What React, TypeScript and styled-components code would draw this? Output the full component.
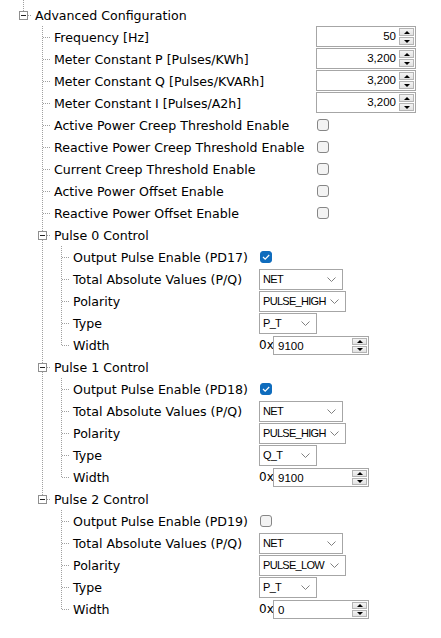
import styled, { createGlobalStyle } from 'styled-components';

type Control =
    | { kind: 'spin'; value: string }
    | { kind: 'check'; checked: boolean }
    | { kind: 'select'; value: string; width: number }
    | { kind: 'hex'; value: string };

type TreeNode = {
    label: string;
    control?: Control;
    controlX?: number; // x where the controls of the children start
    children?: TreeNode[];
};

type FlatRow = {
    node: TreeNode;
    trail: boolean[];
    isLast: boolean;
    controlX: number;
};

const pulse = (n: number, pin: string, on: boolean, polarity: string, type: string, width: string): TreeNode => ({
    label: `Pulse ${n} Control`,
    controlX: 259,
    children: [
        { label: `Output Pulse Enable (${pin})`, control: { kind: 'check', checked: on } },
        { label: 'Total Absolute Values (P/Q)', control: { kind: 'select', value: 'NET', width: 84 } },
        { label: 'Polarity', control: { kind: 'select', value: polarity, width: 87 } },
        { label: 'Type', control: { kind: 'select', value: type, width: 58 } },
        { label: 'Width', control: { kind: 'hex', value: width } },
    ],
});

const tree: TreeNode = {
    label: 'Advanced Configuration',
    controlX: 316,
    children: [
        { label: 'Frequency [Hz]', control: { kind: 'spin', value: '50' } },
        { label: 'Meter Constant P [Pulses/KWh]', control: { kind: 'spin', value: '3,200' } },
        { label: 'Meter Constant Q [Pulses/KVARh]', control: { kind: 'spin', value: '3,200' } },
        { label: 'Meter Constant I [Pulses/A2h]', control: { kind: 'spin', value: '3,200' } },
        { label: 'Active Power Creep Threshold Enable', control: { kind: 'check', checked: false } },
        { label: 'Reactive Power Creep Threshold Enable', control: { kind: 'check', checked: false } },
        { label: 'Current Creep Threshold Enable', control: { kind: 'check', checked: false } },
        { label: 'Active Power Offset Enable', control: { kind: 'check', checked: false } },
        { label: 'Reactive Power Offset Enable', control: { kind: 'check', checked: false } },
        pulse(0, 'PD17', true, 'PULSE_HIGH', 'P_T', '9100'),
        pulse(1, 'PD18', true, 'PULSE_HIGH', 'Q_T', '9100'),
        pulse(2, 'PD19', false, 'PULSE_LOW', 'P_T', '0'),
    ],
};

function flatten(node: TreeNode, trail: boolean[], isLast: boolean, controlX: number, out: FlatRow[]) {
    out.push({ node, trail, isLast, controlX });
    const kids = node.children ?? [];
    kids.forEach((child, i) =>
        flatten(child, [...trail, isLast], i === kids.length - 1, node.controlX ?? controlX, out)
    );
    return out;
}

const GlobalStyle = createGlobalStyle`
    html, body {
        margin: 0;
        padding: 0;
        background: #fff;
    }
    body {
        font-family: 'DejaVu Sans', Verdana, sans-serif;
        font-size: 12.6px;
        color: #000;
    }
`;

const Tree = styled.div`
    width: 441px;
    height: 638px;
    overflow: hidden;
`;

const Lead = styled.div`
    height: 4px;
    padding-left: 13px;
    display: flex;
`;

const Row = styled.div`
    display: flex;
    align-items: center;
    height: 22px;
    padding-left: 13px;
`;

const LabelArea = styled.div<{ $width?: number }>`
    display: flex;
    align-items: center;
    flex: none;
    width: ${(p) => (p.$width ? `${p.$width}px` : 'auto')};
    height: 22px;
`;

const GuideSvg = styled.svg`
    display: block;
    flex: none;
`;

const Label = styled.span`
    margin-left: 3px;
    white-space: nowrap;
    line-height: 22px;
    padding-top: 1px;
`;

const DOT = '#a0a0a0';

type GuideKind = 'none' | 'pass' | 'tee' | 'end';

function Guide({ kind, box }: { kind: GuideKind; box?: boolean }) {
    return (
        <GuideSvg width={19} height={22} viewBox="0 0 19 22">
            {kind !== 'none' && (
                <line
                    x1={10.5}
                    y1={0}
                    x2={10.5}
                    y2={kind === 'end' ? 11 : 22}
                    stroke={DOT}
                    strokeDasharray="1 1"
                />
            )}
            {(kind === 'tee' || kind === 'end') && (
                <line x1={box ? 15 : 11} y1={11.5} x2={19} y2={11.5} stroke={DOT} strokeDasharray="1 1" />
            )}
            {box && (
                <>
                    <rect x={6.5} y={7.5} width={8} height={8} fill="#fff" stroke="#8f8f8f" />
                    <line x1={8} y1={11.5} x2={13} y2={11.5} stroke="#222" />
                </>
            )}
        </GuideSvg>
    );
}

function LeadGuide() {
    return (
        <GuideSvg width={19} height={4} viewBox="0 0 19 4">
            <line x1={10.5} y1={0} x2={10.5} y2={4} stroke={DOT} strokeDasharray="1 1" />
        </GuideSvg>
    );
}

/* ---- spinner ---- */

const SpinBox = styled.div`
    display: flex;
    box-sizing: border-box;
    width: 100px;
    height: 21px;
    padding: 1px;
    border: 1px solid #a6a6a6;
    background: #fff;
    align-self: flex-start;
`;

const SpinValue = styled.span<{ $align: 'left' | 'right' }>`
    flex: 1;
    text-align: ${(p) => p.$align};
    padding: 0 3px;
    font-family: 'Liberation Sans', Arial, sans-serif;
    font-size: 11.5px;
    line-height: 17px;
`;

const SpinButtons = styled.div`
    display: flex;
    flex-direction: column;
    width: 15px;
    gap: 1px;
`;

const SpinButton = styled.div`
    flex: 1;
    display: flex;
    align-items: center;
    justify-content: center;
    border: 1px solid #b4b4b4;
    background: linear-gradient(#f4f4f4, #e2e2e2);
`;

const Arrow = styled.span<{ $up?: boolean }>`
    width: 0;
    height: 0;
    border-left: 3px solid transparent;
    border-right: 3px solid transparent;
    ${(p) => (p.$up ? 'border-bottom: 3px solid #000;' : 'border-top: 3px solid #000;')}
`;

function Spinner() {
    return (
        <SpinButtons>
            <SpinButton>
                <Arrow $up />
            </SpinButton>
            <SpinButton>
                <Arrow />
            </SpinButton>
        </SpinButtons>
    );
}

/* ---- checkbox ---- */

const CheckBox = styled.span<{ $on: boolean }>`
    display: inline-flex;
    align-items: center;
    justify-content: center;
    box-sizing: border-box;
    width: 12px;
    height: 12px;
    margin-left: 1px;
    border-radius: 3px;
    border: 1px solid ${(p) => (p.$on ? '#0f6cbd' : '#868686')};
    background: ${(p) => (p.$on ? '#0f6cbd' : '#f3f3f3')};
`;

/* ---- select ---- */

const SelectBox = styled.div<{ $width: number }>`
    display: flex;
    align-items: center;
    justify-content: space-between;
    box-sizing: border-box;
    width: ${(p) => p.$width}px;
    height: 21px;
    padding: 0 6px 0 3px;
    border: 1px solid #a6a6a6;
    background: #fff;
    font-family: 'Liberation Sans', Arial, sans-serif;
    font-size: 11px;
    letter-spacing: -0.7px;
`;

/* ---- hex ---- */

const HexWrap = styled.div`
    display: flex;
    align-items: center;
`;

const HexPrefix = styled.span`
    width: 14px;
    font-size: 12px;
`;

const HexBox = styled(SpinBox)`
    width: 96px;
    height: 19px;
    align-self: center;
`;

function ControlView({ control }: { control: Control }) {
    switch (control.kind) {
        case 'spin':
            return (
                <SpinBox>
                    <SpinValue $align="right">{control.value}</SpinValue>
                    <Spinner />
                </SpinBox>
            );
        case 'check':
            return (
                <CheckBox $on={control.checked}>
                    {control.checked && (
                        <svg width="10" height="10" viewBox="0 0 10 10">
                            <polyline points="2,5 4.2,7.2 8.2,3" fill="none" stroke="#fff" strokeWidth="1.2" />
                        </svg>
                    )}
                </CheckBox>
            );
        case 'select':
            return (
                <SelectBox $width={control.width}>
                    <span>{control.value}</span>
                    <svg width="9" height="5" viewBox="0 0 9 5">
                        <polyline points="0.5,0.5 4.5,4.5 8.5,0.5" fill="none" stroke="#808080" />
                    </svg>
                </SelectBox>
            );
        case 'hex':
            return (
                <HexWrap>
                    <HexPrefix>0x</HexPrefix>
                    <HexBox>
                        <SpinValue $align="left">{control.value}</SpinValue>
                        <Spinner />
                    </HexBox>
                </HexWrap>
            );
    }
}

export default function App() {
    const rows = flatten(tree, [], true, 316, []);

    return (
        <>
            <GlobalStyle />
            <Tree>
                <Lead>
                    <LeadGuide />
                </Lead>
                {rows.map((row, i) => (
                    <Row key={i}>
                        <LabelArea $width={row.node.control ? row.controlX - 13 : undefined}>
                            {row.trail.map((last, j) => (
                                <Guide key={j} kind={last ? 'none' : 'pass'} />
                            ))}
                            <Guide kind={row.isLast ? 'end' : 'tee'} box={!!row.node.children} />
                            <Label>{row.node.label}</Label>
                        </LabelArea>
                        {row.node.control && <ControlView control={row.node.control} />}
                    </Row>
                ))}
            </Tree>
        </>
    );
}
